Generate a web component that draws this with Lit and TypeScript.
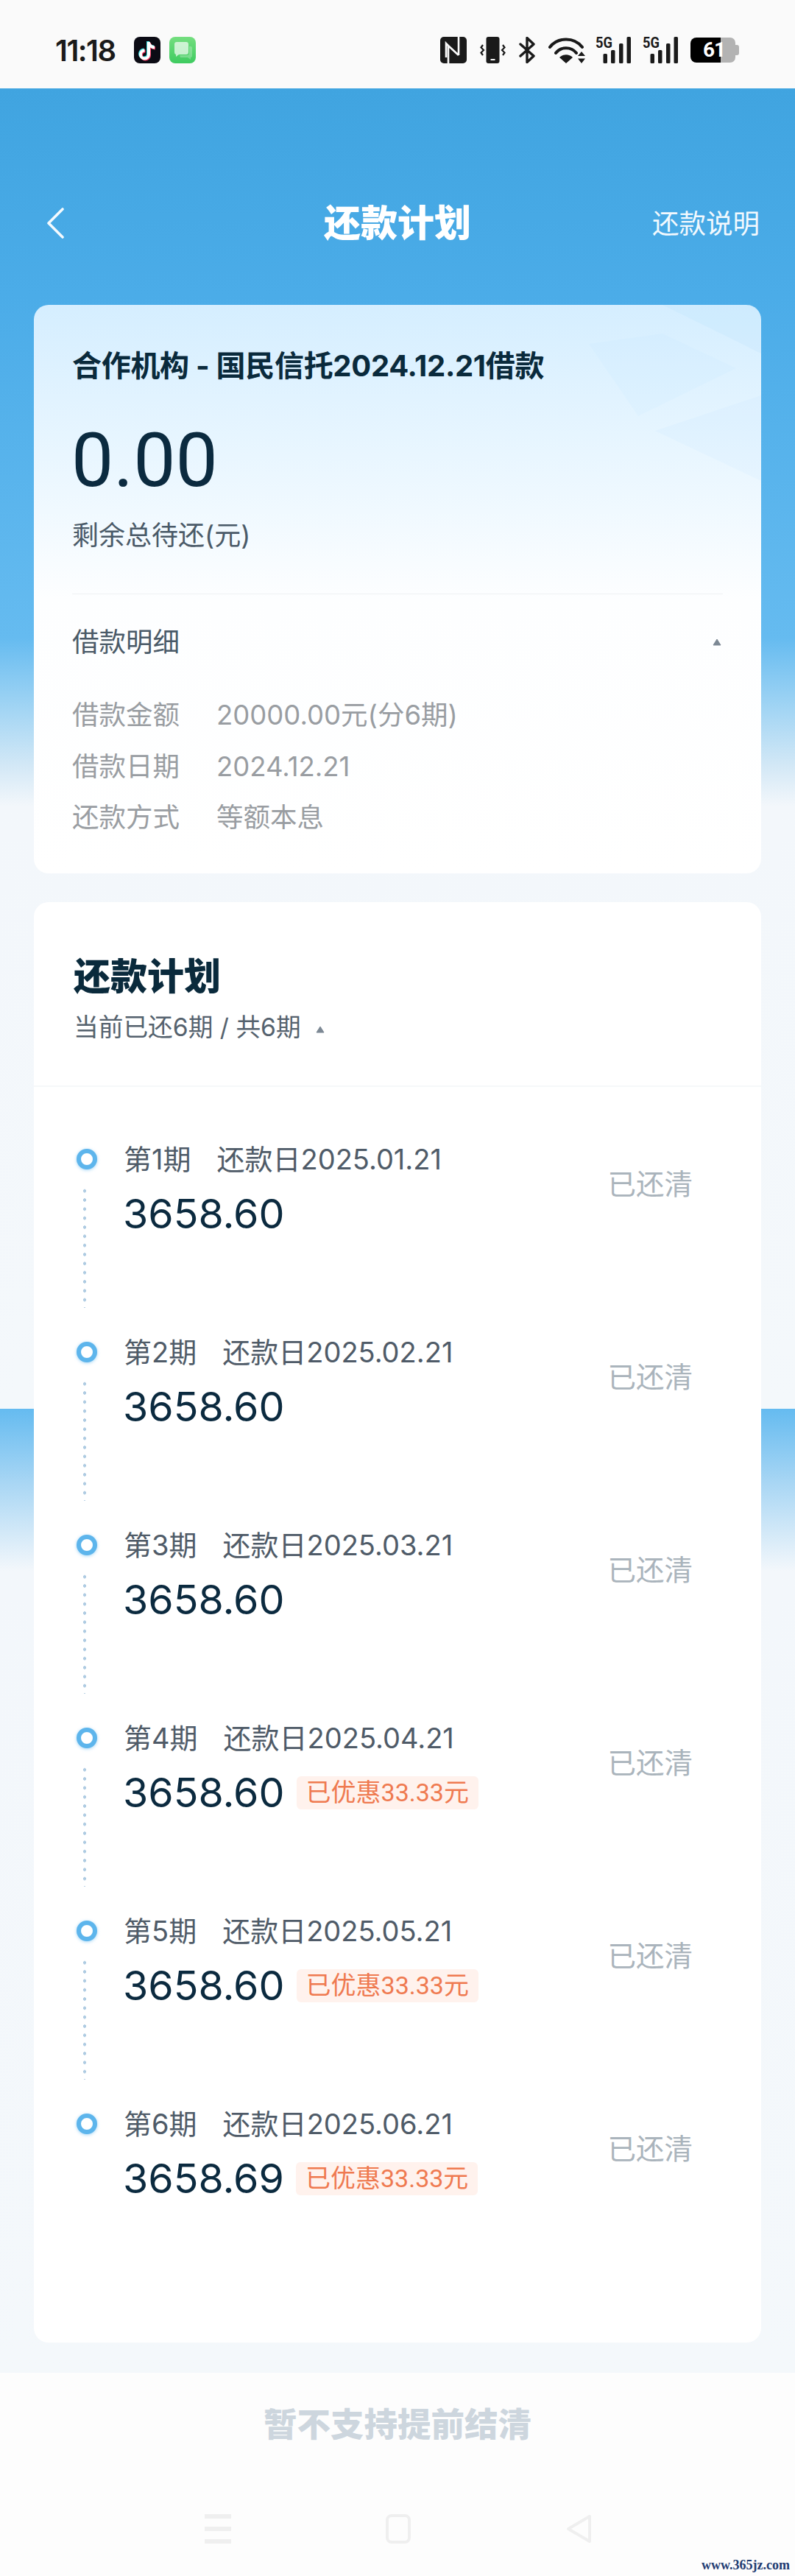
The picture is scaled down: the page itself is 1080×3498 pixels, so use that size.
import { LitElement, css, html, nothing, svg } from 'lit';
import { customElement } from 'lit/decorators.js';

interface Installment {
  no: number;
  due: string;
  amount: string;
  discount?: string;
}

const installments: Installment[] = [
  { no: 1, due: '2025.01.21', amount: '3658.60' },
  { no: 2, due: '2025.02.21', amount: '3658.60' },
  { no: 3, due: '2025.03.21', amount: '3658.60' },
  { no: 4, due: '2025.04.21', amount: '3658.60', discount: '已优惠33.33元' },
  { no: 5, due: '2025.05.21', amount: '3658.60', discount: '已优惠33.33元' },
  { no: 6, due: '2025.06.21', amount: '3658.69', discount: '已优惠33.33元' },
];

const details = [
  ['借款金额', '20000.00元(分6期)'],
  ['借款日期', '2024.12.21'],
  ['还款方式', '等额本息'],
];

const caret = html`<svg class="caret" width="12" height="10" viewBox="0 0 12 10">
  <path d="M6 1 L11 9 H1 Z" fill="#7c8894" stroke="#7c8894" stroke-linejoin="round" />
</svg>`;

const signal = svg`
  <text x="0" y="15" font-size="21" font-weight="700" textLength="23" lengthAdjust="spacingAndGlyphs" fill="#1a1a1a" font-family="Roboto, sans-serif">5G</text>
  <rect x="10.5" y="23" width="5.5" height="13" rx="1.5" fill="#1a1a1a" />
  <rect x="21" y="18" width="5.5" height="18" rx="1.5" fill="#1a1a1a" />
  <rect x="32" y="9" width="5.5" height="27" rx="1.5" fill="#1a1a1a" />
  <rect x="42.5" y="0" width="5.5" height="36" rx="1.5" fill="#1a1a1a" />
`;

@customElement('app-root')
export class AppRoot extends LitElement {
  static override styles = css`
    :host {
      display: block;
      width: 1080px;
      height: 3498px;
      overflow: hidden;
      font-family: Inter, 'Noto Sans CJK SC', sans-serif;
      background: #fdfdfd;
    }

    svg {
      display: block;
      flex: none;
    }

    .status {
      height: 120px;
      background: #fafafa;
      display: flex;
      align-items: center;
      padding: 16px 0 0 75px;
      box-sizing: border-box;
    }

    .time {
      width: 107px;
      font-size: 40px;
      font-weight: 600;
      letter-spacing: -1.5px;
      color: #1a1a1a;
    }

    .app-icons {
      display: flex;
      gap: 12px;
    }

    .sys-icons {
      margin-left: 332px;
      display: flex;
      align-items: center;
    }

    .sig {
      margin-top: -5px;
    }

    .battery {
      position: relative;
      width: 66px;
      height: 34px;
      margin-left: 17px;
    }

    .battery span {
      position: absolute;
      left: 17px;
      top: 0;
      font-family: Roboto, sans-serif;
      font-size: 28px;
      line-height: 34px;
      font-weight: 700;
      letter-spacing: -1px;
      color: #fff;
    }

    .page {
      height: 3102px;
      box-sizing: border-box;
      display: flex;
      flex-direction: column;
      background: linear-gradient(
        180deg,
        #40a4e0 0,
        #4bace8 280px,
        #65bbf0 746px,
        #a5d6f4 847px,
        #d3e8f6 920px,
        #f3f7fb 975px,
        #f4f8fb 1793px,
        #65bbf0 1793px,
        #a8d6f4 1893px,
        #f3f7fb 2013px,
        #f4f8fb 3102px
      );
    }

    .nav {
      height: 294px;
      box-sizing: border-box;
      padding: 153px 48px 0 48px;
      display: grid;
      grid-template-columns: 1fr auto 1fr;
      align-items: center;
      grid-auto-rows: 60px;
      color: #fff;
    }

    .nav svg {
      margin-left: 15px;
    }

    .nav h1 {
      margin: 0;
      padding-bottom: 8px;
      font-size: 50px;
      font-weight: 800;
    }

    .nav .help {
      justify-self: end;
      padding-bottom: 3px;
      font-size: 36.5px;
      color: #f2f9fe;
    }

    .card {
      margin: 0 46px;
      border-radius: 20px;
      background: #fff;
      position: relative;
      overflow: hidden;
    }

    .summary {
      background: linear-gradient(180deg, #d5eeff 0, #f0f9ff 280px, #fdfeff 400px, #fff 100%);
      padding: 55px 52px 51px 52px;
      margin-bottom: 39px;
    }

    .decor {
      position: absolute;
      top: 0;
      right: 0;
    }

    .summary > *:not(.decor) {
      position: relative;
    }

    .org {
      font-size: 40px;
      line-height: 56px;
      font-weight: 700;
      color: #0a2a3c;
      letter-spacing: -0.3px;
    }

    .balance {
      margin: 40px 0 0 -1px;
      font-family: Roboto, sans-serif;
      font-size: 102px;
      line-height: 120px;
      font-weight: 400;
      color: #0b2a3f;
    }

    .balance-label {
      margin-top: 17px;
      font-size: 36px;
      line-height: 50px;
      color: #4a5a68;
    }

    .rule {
      margin-top: 54px;
      height: 1px;
      background: #eef1f3;
    }

    .detail-head {
      margin-top: 40px;
      display: flex;
      align-items: center;
      justify-content: space-between;
      font-size: 36.5px;
      line-height: 50px;
      color: #4a5a68;
      padding-right: 2px;
    }

    .details {
      margin-top: 49px;
      display: flex;
      flex-direction: column;
      gap: 19.5px;
    }

    .detail {
      display: flex;
      font-size: 36.5px;
      line-height: 50px;
      color: #999da2;
    }

    .detail b {
      width: 196px;
      font-weight: 400;
    }

    .plan-head {
      padding: 66px 54px 54px;
      border-bottom: 2px solid #f6f8f9;
    }

    .plan-head h2 {
      margin: 0;
      font-size: 50px;
      line-height: 70px;
      font-weight: 800;
      color: #0a2a3c;
    }

    .progress {
      margin-top: 9px;
      display: flex;
      align-items: center;
      gap: 20px;
      font-size: 33.7px;
      line-height: 50px;
      color: #55626e;
    }

    .progress svg {
      margin-top: 6px;
    }

    .schedule {
      padding: 73px 0 60px;
    }

    .item {
      height: 262px;
      display: flex;
    }

    .rail {
      width: 28px;
      margin-left: 58px;
      padding-top: 11px;
      flex: none;
    }

    .ring {
      width: 28px;
      height: 28px;
      box-sizing: border-box;
      border-radius: 50%;
      border: 6px solid #5db5ec;
      background: #fff;
      box-shadow: 0 1px 4px rgba(93, 181, 236, 0.55);
    }

    .dots {
      width: 6px;
      height: 165px;
      margin: 23px 0 0 8px;
      background: radial-gradient(circle, #aecbe2 1.9px, transparent 2.4px) 0 0 / 6px 12.33px repeat-y;
    }

    .body {
      margin-left: 36px;
      flex: 1;
    }

    .due {
      display: flex;
      gap: 35px;
      font-size: 38px;
      line-height: 50px;
      color: #4f5b68;
    }

    .amount-row {
      margin: 14px 0 0 -1px;
      height: 70px;
      display: flex;
      align-items: center;
      gap: 16px;
    }

    .amount {
      font-size: 55.5px;
      line-height: 70px;
      color: #0b2a3f;
    }

    .discount {
      height: 45px;
      line-height: 45px;
      padding: 0 13px;
      border-radius: 6px;
      background: #fff2ed;
      color: #ef7a50;
      font-family: Roboto, 'Noto Sans CJK SC', sans-serif;
      font-size: 34px;
    }

    .state {
      margin: 34px 93px 0 0;
      font-size: 38.5px;
      line-height: 50px;
      color: #aab4bc;
    }

    .footer {
      position: relative;
      height: 276px;
      box-sizing: border-box;
      padding-top: 41px;
      background: #fdfdfd;
    }

    .cta {
      text-align: center;
      font-size: 45.5px;
      line-height: 60px;
      font-weight: 800;
      color: #cdd6de;
    }

    .softkeys {
      margin-top: 91px;
      padding-left: 278px;
      display: flex;
      gap: 210px;
    }

    .mark {
      position: absolute;
      right: 7px;
      bottom: 5px;
      font-family: 'Liberation Serif', serif;
      font-size: 18px;
      font-weight: 700;
      line-height: 20px;
      color: #1f3c72;
    }
  `;

  private renderStatus() {
    return html`<div class="status">
      <div class="time">11:18</div>
      <div class="app-icons">
        <svg width="36" height="36" viewBox="0 0 36 36">
          <rect width="36" height="36" rx="8" fill="#0b0b14" />
          <g fill="none" stroke-width="4">
            <path d="M19 6 V23 a5.5 5.5 0 1 1 -5.5 -5.5 M19 7 C20 11 23 13 27 13.5" stroke="#3fe0e6" />
            <path d="M21 8 V25 a5.5 5.5 0 1 1 -5.5 -5.5 M21 9 C22 13 25 15 29 15.5" stroke="#f0335e" />
            <path d="M20 7 V24 a5.5 5.5 0 1 1 -5.5 -5.5 M20 8 C21 12 24 14 28 14.5" stroke="#fff" />
          </g>
        </svg>
        <svg width="36" height="36" viewBox="0 0 36 36">
          <defs>
            <linearGradient id="msg" x1="0" y1="0" x2="0" y2="1">
              <stop offset="0" stop-color="#74de7f" />
              <stop offset="1" stop-color="#3ecb60" />
            </linearGradient>
          </defs>
          <rect width="36" height="36" rx="8" fill="url(#msg)" />
          <path d="M10 7 H23 a3 3 0 0 1 3 3 V21 a3 3 0 0 1 -3 3 H13 L9 27 V24 a3 3 0 0 1 -2 -3 V10 a3 3 0 0 1 3 -3 Z" fill="#fff" opacity="0.68" />
          <path d="M27 13 H29 a2 2 0 0 1 2 2 V26 a2 2 0 0 1 -2 2 V31 L25 28 H15 L14 25 H24 a3 3 0 0 0 3 -3 Z" fill="#fff" opacity="0.25" />
        </svg>
      </div>
      <div class="sys-icons">
        <svg width="36" height="36" viewBox="0 0 36 36">
          <rect width="36" height="36" rx="5" fill="#1a1a1a" />
          <path d="M11 36 V12 L25 25 M25 0 V25 M11 12 L8 9 V28" fill="none" stroke="#fafafa" stroke-width="2.6" />
        </svg>
        <svg style="margin-left:17px" width="37" height="36" viewBox="0 0 37 36">
          <rect x="9.5" width="18" height="36" rx="3" fill="#1a1a1a" />
          <rect x="15.5" y="30" width="6" height="2" fill="#fafafa" />
          <path d="M5 11 l-2.5 3.5 l3.5 3.5 l-3.5 3.5 l2.5 3.5 M32 11 l2.5 3.5 l-3.5 3.5 l3.5 3.5 l-2.5 3.5" fill="none" stroke="#1a1a1a" stroke-width="2.2" />
        </svg>
        <svg style="margin-left:17px" width="23" height="36" viewBox="0 0 23 36">
          <path d="M2 10 L20 26 L11 34.5 V1.5 L20 10 L2 26" fill="none" stroke="#1a1a1a" stroke-width="3.4" stroke-linecap="round" stroke-linejoin="round" />
        </svg>
        <svg style="margin-left:17px" width="50" height="35" viewBox="0 0 50 35">
          <g fill="none" stroke="#1a1a1a" stroke-width="4" stroke-linecap="round">
            <path d="M2 13 C13 -1 35 -1 46 13" />
            <path d="M10 21 C17 12 31 12 38 21" />
          </g>
          <path d="M24 35 L15 27 C20 22 28 22 33 27 Z" fill="#1a1a1a" />
          <path d="M45 19 L50 25 H40 Z M45 35 L40 28.5 H50 Z" fill="#1a1a1a" />
        </svg>
        <svg class="sig" style="margin-left:14px" width="48" height="41" viewBox="0 -5 48 41">${signal}</svg>
        <svg class="sig" style="margin-left:16px" width="48" height="41" viewBox="0 -5 48 41">${signal}</svg>
        <div class="battery">
          <svg width="66" height="34" viewBox="0 0 66 34">
            <path d="M41 0 H54 a7 7 0 0 1 7 7 V10 h2 a3 3 0 0 1 3 3 V21 a3 3 0 0 1 -3 3 h-2 V27 a7 7 0 0 1 -7 7 H41 Z" fill="#b3b3b3" />
            <path d="M8 0 H41 V34 H8 a8 8 0 0 1 -8 -8 V8 a8 8 0 0 1 8 -8 Z" fill="#000" />
          </svg>
          <span>61</span>
        </div>
      </div>
    </div>`;
  }

  private renderSummary() {
    return html`<section class="card summary">
      <svg class="decor" width="340" height="260" viewBox="0 0 340 260">
        <path d="M206 0 H340 V66 Z" fill="#9fd3f5" opacity="0.12" />
        <path d="M206 39 L306 86 L173 151 L106 53 Z" fill="#9fd6fa" opacity="0.06" />
        <path d="M196 171 L340 123 V239 Z" fill="#9fd6fa" opacity="0.07" />
      </svg>
      <div class="org">合作机构 - 国民信托2024.12.21借款</div>
      <div class="balance">0.00</div>
      <div class="balance-label">剩余总待还(元)</div>
      <div class="rule"></div>
      <div class="detail-head"><span>借款明细</span>${caret}</div>
      <div class="details">
        ${details.map(([k, v]) => html`<div class="detail"><b>${k}</b><span>${v}</span></div>`)}
      </div>
    </section>`;
  }

  private renderItem(item: Installment, last: boolean) {
    return html`<div class="item">
      <div class="rail">
        <div class="ring"></div>
        ${last ? nothing : html`<div class="dots"></div>`}
      </div>
      <div class="body">
        <div class="due"><span>第${item.no}期</span><span>还款日${item.due}</span></div>
        <div class="amount-row">
          <span class="amount">${item.amount}</span>
          ${item.discount ? html`<span class="discount">${item.discount}</span>` : nothing}
        </div>
      </div>
      <div class="state">已还清</div>
    </div>`;
  }

  override render() {
    return html`
      ${this.renderStatus()}
      <main class="page">
        <header class="nav">
          <svg width="24" height="42" viewBox="0 0 24 42">
            <path d="M22 2 L3 21 L22 40" fill="none" stroke="#f4fafe" stroke-width="3.6" stroke-linecap="round" stroke-linejoin="round" />
          </svg>
          <h1>还款计划</h1>
          <span class="help">还款说明</span>
        </header>
        ${this.renderSummary()}
        <section class="card">
          <div class="plan-head">
            <h2>还款计划</h2>
            <div class="progress"><span>当前已还6期 / 共6期</span>${caret}</div>
          </div>
          <div class="schedule">
            ${installments.map((it, i) => this.renderItem(it, i === installments.length - 1))}
          </div>
        </section>
      </main>
      <footer class="footer">
        <div class="cta">暂不支持提前结清</div>
        <div class="softkeys">
          <svg width="36" height="40" viewBox="0 0 36 40">
            <path d="M0 0 H36 V6 H0 Z M0 17 H36 V23 H0 Z M0 34 H36 V40 H0 Z" fill="#efefef" />
          </svg>
          <svg width="34" height="40" viewBox="0 0 34 40">
            <rect x="2" y="2" width="30" height="36" rx="6" fill="none" stroke="#efefef" stroke-width="4" />
          </svg>
          <svg style="margin-left:1px" width="34" height="40" viewBox="0 0 34 40">
            <path d="M32 3 V37 L3 20 Z" fill="none" stroke="#efefef" stroke-width="4" stroke-linejoin="round" />
          </svg>
        </div>
        <div class="mark">www.365jz.com</div>
      </footer>
    `;
  }
}
